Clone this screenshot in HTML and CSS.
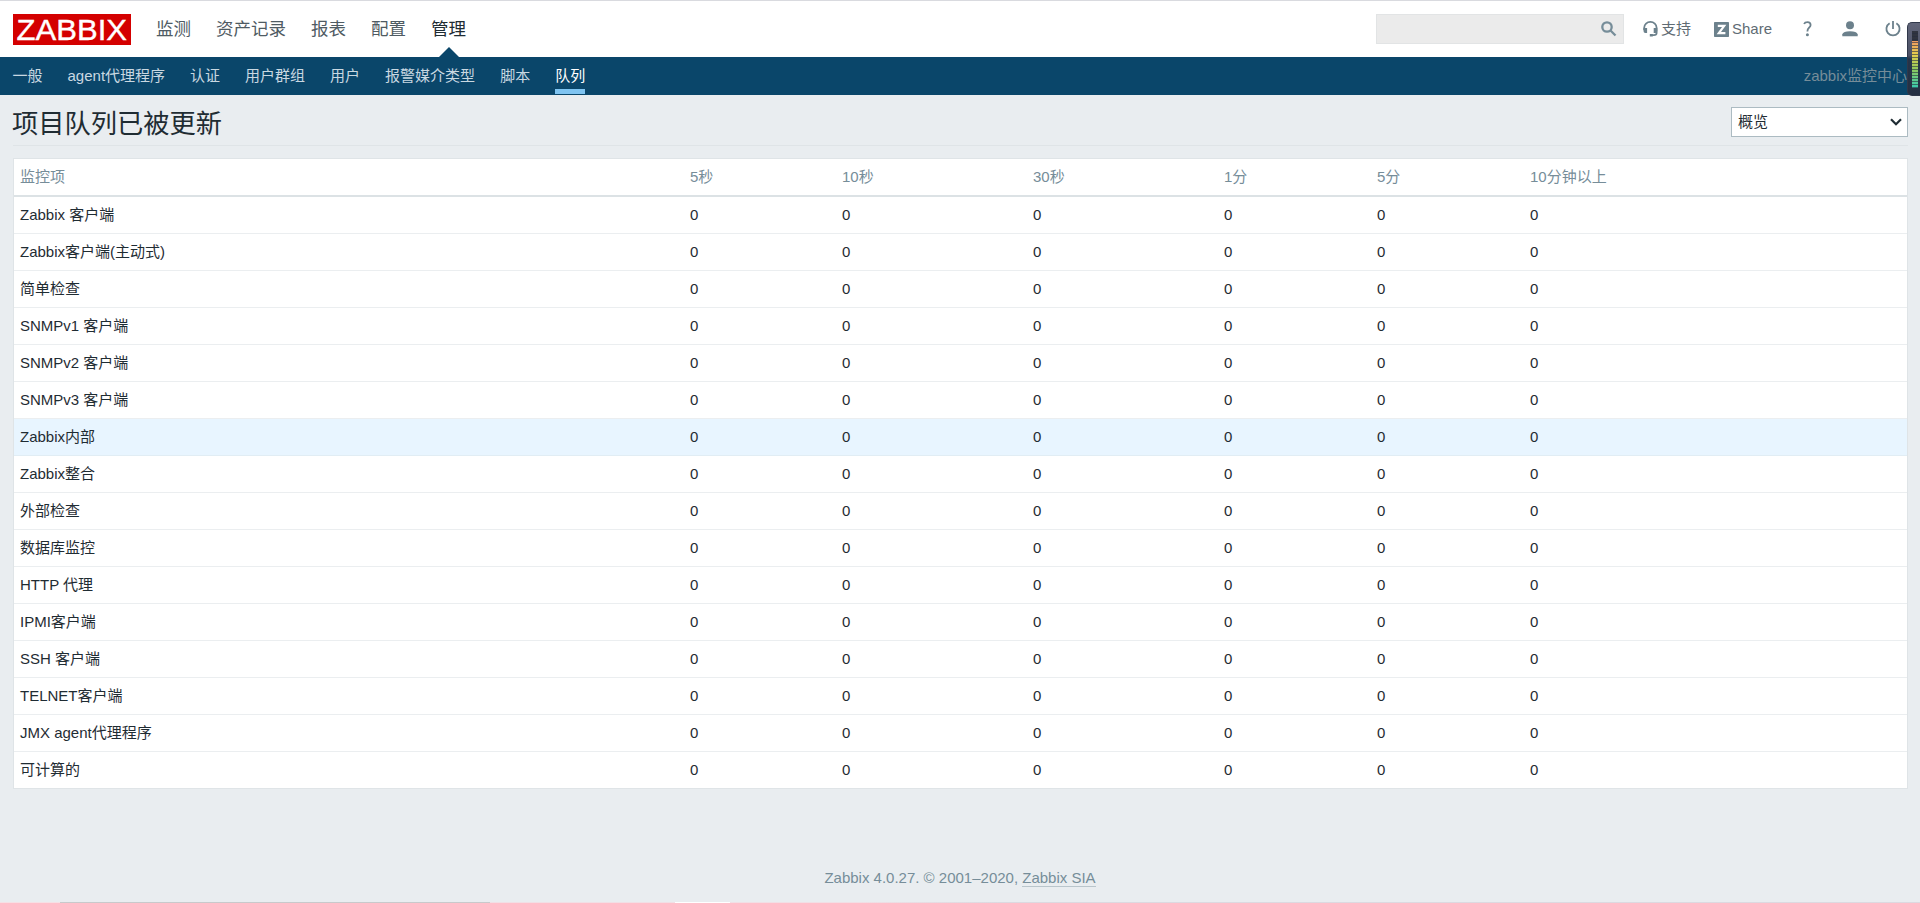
FILE: index.html
```html
<!DOCTYPE html>
<html lang="zh-CN">
<head>
  <meta charset="utf-8">
  <title>项目队列已被更新</title>
  <link rel="stylesheet" href="styles.css">
</head>
<body>
  <header class="top-nav">
    <a class="logo" href="#">
      <svg width="118" height="31" viewBox="0 0 118 31">
        <rect width="118" height="31" fill="#d40000"/>
        <text x="3.5" y="26.3" textLength="110.5" lengthAdjust="spacingAndGlyphs">ZABBIX</text>
      </svg>
    </a>
    <ul class="top-nav-menu">
      <li><a href="#">监测</a></li>
      <li><a href="#">资产记录</a></li>
      <li><a href="#">报表</a></li>
      <li><a href="#">配置</a></li>
      <li class="selected"><a href="#">管理</a></li>
    </ul>
    <div class="search">
      <input type="text">
      <svg class="search-icon" width="16" height="16" viewBox="0 0 16 16">
        <circle cx="6" cy="6" r="4.7"/>
        <path d="M9.5 9.5l5 5"/>
      </svg>
    </div>
    <ul class="top-nav-icons">
      <li>
        <a class="support" href="#">
          <svg width="15" height="16" viewBox="0 0 15 16">
            <path class="line" d="M1.2 9V6.8a6.2 5.9 0 0 1 12.4 0V12q0 2-2.8 2.2H8.5"/>
            <path d="M.5 7h3.6v5H2.4Q.5 12 .5 10zM10.7 7h3.6v3q0 2-1.9 2h-1.7zM6.8 13h3v2.5h-3z"/>
          </svg>
          <span>支持</span>
        </a>
      </li>
      <li>
        <a class="share" href="#">
          <svg width="15" height="15" viewBox="0 0 15 15">
            <rect width="15" height="15" rx=".7"/>
            <path class="z" d="M3.8 3.8h6.4L4.8 11.2H11.4"/>
          </svg>
          <span>Share</span>
        </a>
      </li>
      <li>
        <a class="help" href="#">
          <svg width="10" height="16" viewBox="0 0 10 16">
            <path class="line" d="M1.1 3Q1.8 1.1 4.5 1.1Q7.6 1.1 7.6 4Q7.6 5.5 6 6.8Q4.4 8.1 4.4 10.6"/>
            <circle cx="4.4" cy="13.8" r="1.5"/>
          </svg>
        </a>
      </li>
      <li>
        <a class="profile" href="#">
          <svg width="16" height="16" viewBox="0 0 16 16">
            <circle cx="8" cy="4.2" r="4"/>
            <path d="M.3 15.3v-2Q1.2 10.2 8 10.2T15.7 13.3v2z"/>
          </svg>
        </a>
      </li>
      <li>
        <a class="signout" href="#">
          <svg width="16" height="16" viewBox="0 0 16 16">
            <path class="line" d="M4.6 2.2a6.6 6.6 0 1 0 6.8 0M8 0v8"/>
          </svg>
        </a>
      </li>
    </ul>
  </header>

  <nav class="sub-nav">
    <ul>
      <li><a href="#">一般</a></li>
      <li><a href="#">agent代理程序</a></li>
      <li><a href="#">认证</a></li>
      <li><a href="#">用户群组</a></li>
      <li><a href="#">用户</a></li>
      <li><a href="#">报警媒介类型</a></li>
      <li><a href="#">脚本</a></li>
      <li class="selected"><a href="#">队列</a></li>
    </ul>
    <div class="server-name">zabbix监控中心</div>
  </nav>

  <main>
    <div class="header-title">
      <h1>项目队列已被更新</h1>
      <div class="select">
        <span>概览</span>
        <svg width="12" height="8" viewBox="0 0 12 8"><path d="M1 1.2l5 5 5-5"/></svg>
      </div>
    </div>

    <table class="list-table">
      <colgroup>
        <col class="col-item"><col class="col-s5"><col class="col-s10"><col class="col-s30"><col class="col-m1"><col class="col-m5"><col>
      </colgroup>
      <thead>
        <tr><th>监控项</th><th>5秒</th><th>10秒</th><th>30秒</th><th>1分</th><th>5分</th><th>10分钟以上</th></tr>
      </thead>
      <tbody>
        <tr><td>Zabbix 客户端</td><td>0</td><td>0</td><td>0</td><td>0</td><td>0</td><td>0</td></tr>
        <tr><td>Zabbix客户端(主动式)</td><td>0</td><td>0</td><td>0</td><td>0</td><td>0</td><td>0</td></tr>
        <tr><td>简单检查</td><td>0</td><td>0</td><td>0</td><td>0</td><td>0</td><td>0</td></tr>
        <tr><td>SNMPv1 客户端</td><td>0</td><td>0</td><td>0</td><td>0</td><td>0</td><td>0</td></tr>
        <tr><td>SNMPv2 客户端</td><td>0</td><td>0</td><td>0</td><td>0</td><td>0</td><td>0</td></tr>
        <tr><td>SNMPv3 客户端</td><td>0</td><td>0</td><td>0</td><td>0</td><td>0</td><td>0</td></tr>
        <tr class="hover"><td>Zabbix内部</td><td>0</td><td>0</td><td>0</td><td>0</td><td>0</td><td>0</td></tr>
        <tr><td>Zabbix整合</td><td>0</td><td>0</td><td>0</td><td>0</td><td>0</td><td>0</td></tr>
        <tr><td>外部检查</td><td>0</td><td>0</td><td>0</td><td>0</td><td>0</td><td>0</td></tr>
        <tr><td>数据库监控</td><td>0</td><td>0</td><td>0</td><td>0</td><td>0</td><td>0</td></tr>
        <tr><td>HTTP 代理</td><td>0</td><td>0</td><td>0</td><td>0</td><td>0</td><td>0</td></tr>
        <tr><td>IPMI客户端</td><td>0</td><td>0</td><td>0</td><td>0</td><td>0</td><td>0</td></tr>
        <tr><td>SSH 客户端</td><td>0</td><td>0</td><td>0</td><td>0</td><td>0</td><td>0</td></tr>
        <tr><td>TELNET客户端</td><td>0</td><td>0</td><td>0</td><td>0</td><td>0</td><td>0</td></tr>
        <tr><td>JMX agent代理程序</td><td>0</td><td>0</td><td>0</td><td>0</td><td>0</td><td>0</td></tr>
        <tr><td>可计算的</td><td>0</td><td>0</td><td>0</td><td>0</td><td>0</td><td>0</td></tr>
      </tbody>
    </table>
  </main>

  <footer>Zabbix 4.0.27. © 2001–2020, <a href="#">Zabbix SIA</a></footer>

  <div class="meter"><div class="meter-bars"></div></div>
  <div class="bottom-edge"></div>
</body>
</html>
```
FILE: styles.css
```css
* {
  box-sizing: border-box;
}
body {
  display: flex;
  flex-direction: column;
  height: 903px;
  margin: 0;
  overflow: hidden;
  background: #e9edf0;
  color: #1f2c33;
  font-family: "Liberation Sans", "Noto Sans CJK SC", sans-serif;
  font-size: 15px;
  line-height: 20px;
}
ul {
  display: flex;
  margin: 0;
  padding: 0;
  list-style: none;
}
a {
  color: inherit;
  text-decoration: none;
}
svg {
  display: block;
}

/* top menu */
.top-nav {
  display: flex;
  align-items: center;
  height: 57px;
  padding-left: 13px;
  border-top: 1px solid #d9dadf;
  background: #fff;
}
.logo svg {
  overflow: visible;
}
.logo text {
  fill: #fff;
  stroke: #fff;
  stroke-width: .4;
  font-family: "Liberation Sans", sans-serif;
  font-size: 30px;
}
.top-nav-menu {
  gap: 25px;
  margin-left: 25px;
  color: #4f5b63;
  font-size: 17.5px;
}
.top-nav-menu li {
  position: relative;
  line-height: 56px;
}
.top-nav-menu .selected {
  color: #1f2c33;
}
.top-nav-menu .selected::after {
  content: "";
  position: absolute;
  bottom: 0;
  left: 50%;
  margin-left: -10px;
  border: 10px solid transparent;
  border-top: 0;
  border-bottom-color: #0a466a;
}
.search {
  position: relative;
  margin-left: auto;
}
.search input {
  display: block;
  width: 248px;
  height: 30px;
  border: 1px solid #e2e4e5;
  background: #ebebeb;
}
.search-icon {
  position: absolute;
  top: 7px;
  right: 7px;
  fill: none;
  stroke: #768d99;
  stroke-width: 2.3;
}
.top-nav-icons {
  align-items: center;
  margin: 0 19px 0 19px;
  color: #5f6c74;
}
.top-nav-icons a {
  display: flex;
  align-items: center;
  gap: 3px;
}
.top-nav-icons svg {
  fill: #6c818c;
}
.top-nav-icons .line {
  fill: none;
  stroke: #6c818c;
  stroke-width: 1.8;
}
.top-nav-icons .z {
  fill: none;
  stroke: #fff;
  stroke-width: 2.2;
}
.share {
  margin-left: 23px;
}
.help {
  margin-left: 31px;
}
.profile {
  margin-left: 29px;
}
.signout {
  margin-left: 27px;
}

/* second level menu */
.sub-nav {
  display: flex;
  justify-content: space-between;
  height: 38px;
  padding: 0 13px 0 12.5px;
  background: #0a466a;
  color: #c9d8e1;
  line-height: 37px;
}
.sub-nav ul {
  gap: 25px;
}
.sub-nav li {
  height: 37px;
}
.sub-nav .selected {
  border-bottom: 5px solid #7fc4f1;
  color: #fff;
}
.server-name {
  color: #768d99;
}

main {
  padding: 0 12px 0 13px;
}
.header-title {
  display: flex;
  justify-content: space-between;
  height: 51px;
  border-bottom: 1px solid #dfe4e7;
}
h1 {
  margin: 0 0 0 -1px;
  font-size: 26.25px;
  font-weight: normal;
  line-height: 58px;
}
.select {
  display: flex;
  align-items: center;
  justify-content: space-between;
  width: 177px;
  height: 30px;
  margin-top: 12px;
  padding: 0 5px 0 6px;
  border: 1px solid #acbbc2;
  background: #fff;
}
.select path {
  fill: none;
  stroke: #1f2c33;
  stroke-width: 2.2;
}

/* queue overview */
.list-table {
  width: 100%;
  margin-top: 12px;
  border: 1px solid #dfe4e7;
  border-spacing: 0;
  background: #fff;
  table-layout: fixed;
}
.list-table th,
.list-table td {
  height: 37px;
  padding: 0 6px;
  border-bottom: 1px solid #ebeef0;
  font-weight: normal;
  text-align: left;
}
.list-table th {
  height: 38px;
  border-bottom: 2px solid #dce2e5;
  color: #768d99;
}
.list-table tr:last-child td {
  height: 36px;
  border-bottom: 0;
}
.list-table thead tr:last-child th {
  border-bottom: 2px solid #dce2e5;
}
.list-table .hover td {
  border-bottom-color: #e1edf4;
  background: #e8f5ff;
}
.col-item {
  width: 670px;
}
.col-s5 {
  width: 152px;
}
.col-s10,
.col-s30 {
  width: 191px;
}
.col-m1,
.col-m5 {
  width: 153px;
}

footer {
  margin-top: 79px;
  color: #768d99;
  text-align: center;
}
footer a {
  border-bottom: 1px solid #b9c5cb;
}

/* level meter docked to the right edge of the screen */
.meter {
  position: absolute;
  top: 22px;
  right: 0;
  width: 13px;
  height: 74px;
  padding: 8px 2px 0 4px;
  border: 1px solid #30384a;
  border-right: 0;
  border-radius: 5px 0 0 5px;
  background: linear-gradient(#616579, #4b5065 45%, #263449 50%, #253043);
}
.meter-bars {
  height: 57px;
  background:
    repeating-linear-gradient(transparent 0 2px, rgba(38, 45, 62, .6) 2px 3px),
    linear-gradient(#30343f 0 10px, #ef9a62 10px, #e3cf4e 24px, #8fc75c 38px, #36c9b0);
}
.bottom-edge {
  position: absolute;
  top: 902px;
  left: 0;
  width: 100%;
  height: 1px;
  background: linear-gradient(90deg, #f6e0e5 60px, #c8c9cb 60px 490px, #f1dfe5 490px 675px, #fff 675px 730px, #f1dfe5 730px 860px, #dcd9e0 1000px);
}
```
